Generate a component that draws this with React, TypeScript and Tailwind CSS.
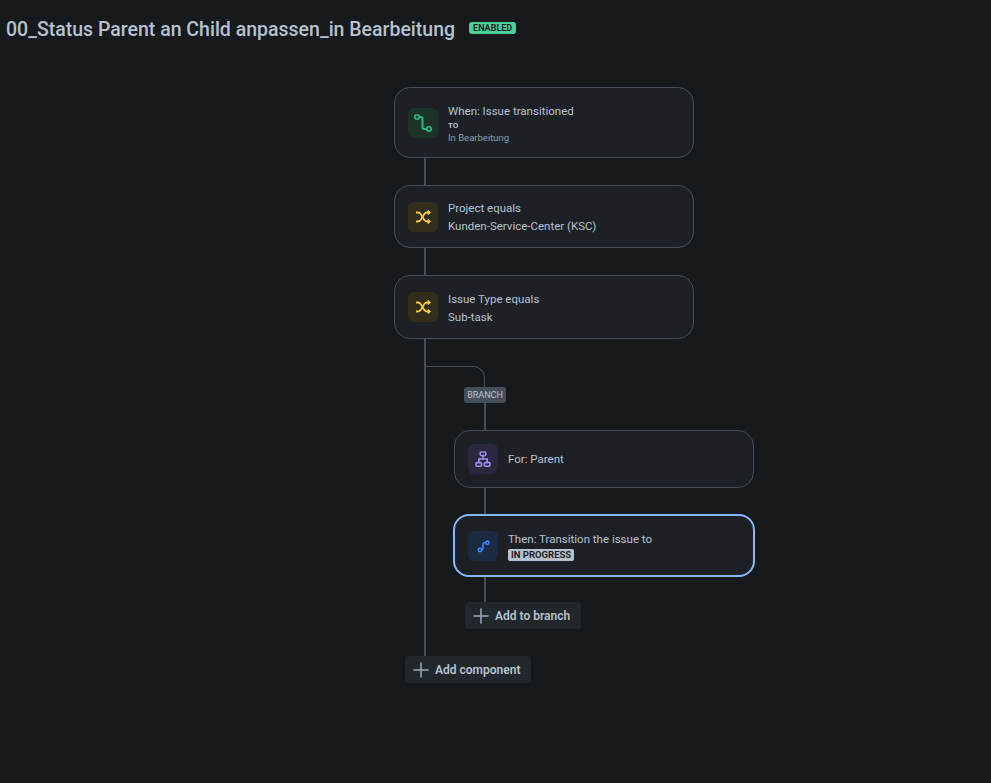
import React from "react";
import { Plus } from "lucide-react";

const Line = ({ className }: { className: string }) => (
  <div className={`w-[2px] bg-[#454f59] ${className}`} />
);

const TransitionIcon = () => (
  <svg width="30" height="30" viewBox="0 0 30 30" fill="none" stroke="#2abb7f" strokeWidth="2">
    <circle cx="9" cy="9" r="2.2" strokeWidth="1.6" />
    <circle cx="21" cy="21" r="2.2" strokeWidth="1.6" />
    <path d="M11.2 9H13a1.5 1.5 0 0 1 1.5 1.5V19.5A1.5 1.5 0 0 0 16 21h2.8" />
  </svg>
);

const ShuffleIcon = () => (
  <svg width="30" height="30" viewBox="0 0 30 30" fill="none" stroke="#f5cd47" strokeWidth="1.8">
    <path d="M8 10.5H10c1.2 0 2 .5 2.6 1.4l3.8 6.2c.6.9 1.4 1.4 2.6 1.4h1.5" />
    <path d="M8 19.5H10c1.2 0 2-.5 2.6-1.4l3.8-6.2c.6-.9 1.4-1.4 2.6-1.4h1.5" />
    <path d="M20 8.5v4l2.5-2zM20 17.5v4l2.5-2z" fill="#f5cd47" strokeWidth="1" strokeLinejoin="round" />
  </svg>
);

const ParentIcon = () => (
  <svg width="30" height="30" viewBox="0 0 30 30" fill="none" stroke="#9f8fef" strokeWidth="1.6">
    <rect x="12.2" y="8" width="5.6" height="3.6" rx="1" />
    <rect x="8" y="18.6" width="5.6" height="3.6" rx="1" />
    <rect x="16.4" y="18.6" width="5.6" height="3.6" rx="1" />
    <path d="M15 11.6V15M10.8 18.6V15H19.2V18.6" />
  </svg>
);

const RouteIcon = () => (
  <svg width="30" height="30" viewBox="0 0 30 30" fill="none" stroke="#388bff" strokeWidth="1.5">
    <circle cx="12" cy="19" r="1.7" />
    <circle cx="19.3" cy="11.7" r="1.7" />
    <path d="M13.700 19a1.500 1.500 0 0 0 1.300-1.500V13.200a1.500 1.500 0 0 1 1.500-1.500H17.600" />
  </svg>
);

const Tile = ({ className, children }: { className: string; children: React.ReactNode }) => (
  <div className={`flex h-[30px] w-[30px] shrink-0 items-center justify-center rounded-[6px] ${className}`}>
    {children}
  </div>
);

const Card = ({
  className,
  tile,
  children,
}: {
  className: string;
  tile: React.ReactNode;
  children: React.ReactNode;
}) => (
  <div className={`flex items-center gap-[10px] rounded-[16px] bg-[#1d2125] ${className}`}>
    {tile}
    <div className="flex flex-col text-[11.5px] text-[#b6c2cf]">{children}</div>
  </div>
);

const AddButton = ({ label, className }: { label: string; className: string }) => (
  <button className={`flex h-[27px] items-center gap-[3px] rounded-[3px] bg-[#22272b] pl-[5px] text-[12px] font-semibold text-[#b6c2cf] ${className}`}>
    <Plus size={24} strokeWidth={1.5} className="-mx-[1px] text-[#9fadbc]" />
    {label}
  </button>
);

const shuffle = (
  <Tile className="bg-[#332e1b]">
    <ShuffleIcon />
  </Tile>
);

const plain = "w-[300px] border border-[#454f59] pl-[13px]";

export default function App() {
  return (
    <div className="min-h-[783px] overflow-hidden bg-[#161a1d] font-['Roboto','Noto_Sans',sans-serif]">
      <header className="flex h-[87px] items-start gap-[14px] pl-[6px] pt-[16px]">
        <h1 className="text-[19.5px] leading-[28px] font-medium text-[#b6c2cf]">
          00_Status Parent an Child anpassen_in Bearbeitung
        </h1>
        <span className="mt-[6px] rounded-[3px] bg-[#4bce97] px-[4px] text-[9px] leading-[12px] font-bold text-[#1d2125]">
          ENABLED
        </span>
      </header>

      <main className="flex flex-col pl-[394px]">
        <Card className={`${plain} h-[71px]`} tile={<Tile className="bg-[#1c3329]"><TransitionIcon /></Tile>}>
          <span className="mt-[2px] leading-[16px]">When: Issue transitioned</span>
          <span className="mt-[1px] mb-[-1px] text-[8px] leading-[12px] font-bold">TO</span>
          <span className="text-[9.5px] leading-[13px] text-[#8c9bab]">In Bearbeitung</span>
        </Card>
        <Line className="ml-[30px] h-[27px]" />
        <Card className={`${plain} h-[63px]`} tile={shuffle}>
          <span className="leading-[18px]">Project equals</span>
          <span className="leading-[18px]">Kunden-Service-Center (KSC)</span>
        </Card>
        <Line className="ml-[30px] h-[27px]" />
        <Card className={`${plain} h-[64px]`} tile={shuffle}>
          <span className="mt-[2px] leading-[18px]">Issue Type equals</span>
          <span className="leading-[18px]">Sub-task</span>
        </Card>

        <div className="ml-[30px] flex">
          <Line className="h-[317px] shrink-0" />
          <div className="flex flex-col pt-[27px]">
            <div className="ml-[-1px] h-[21px] w-[60px] rounded-tr-[12px] border-t border-r border-[#454f59]" />
            <span className="ml-[38px] w-[42px] rounded-[3px] bg-[#454f59] text-center text-[9px] leading-[16px] text-[#b6c2cf]">
              BRANCH
            </span>
            <Line className="ml-[58px] h-[27px]" />
            <Card className={`${plain} ml-[28px] h-[58px]`} tile={<Tile className="bg-[#2b273f]"><ParentIcon /></Tile>}>
              <span className="mt-[2px]">For: Parent</span>
            </Card>
            <Line className="ml-[58px] h-[26px]" />
            <Card
              className="ml-[27px] h-[63px] w-[302px] border-2 border-[#85b8ff] pl-[13px]"
              tile={<Tile className="bg-[#1c2b41]"><RouteIcon /></Tile>}
            >
              <span className="mt-[-2px] leading-[16px]">Then: Transition the issue to</span>
              <span className="mt-[2px] mb-[-2px] w-fit rounded-[2px] bg-[#b6c2cf] px-[3px] text-[9.5px] leading-[12px] font-bold text-[#1d2125]">
                IN PROGRESS
              </span>
            </Card>
            <Line className="ml-[58px] h-[25px]" />
            <AddButton label="Add to branch" className="ml-[39px] w-[116px]" />
          </div>
        </div>
        <AddButton label="Add component" className="ml-[11px] w-[126px]" />
      </main>
    </div>
  );
}
